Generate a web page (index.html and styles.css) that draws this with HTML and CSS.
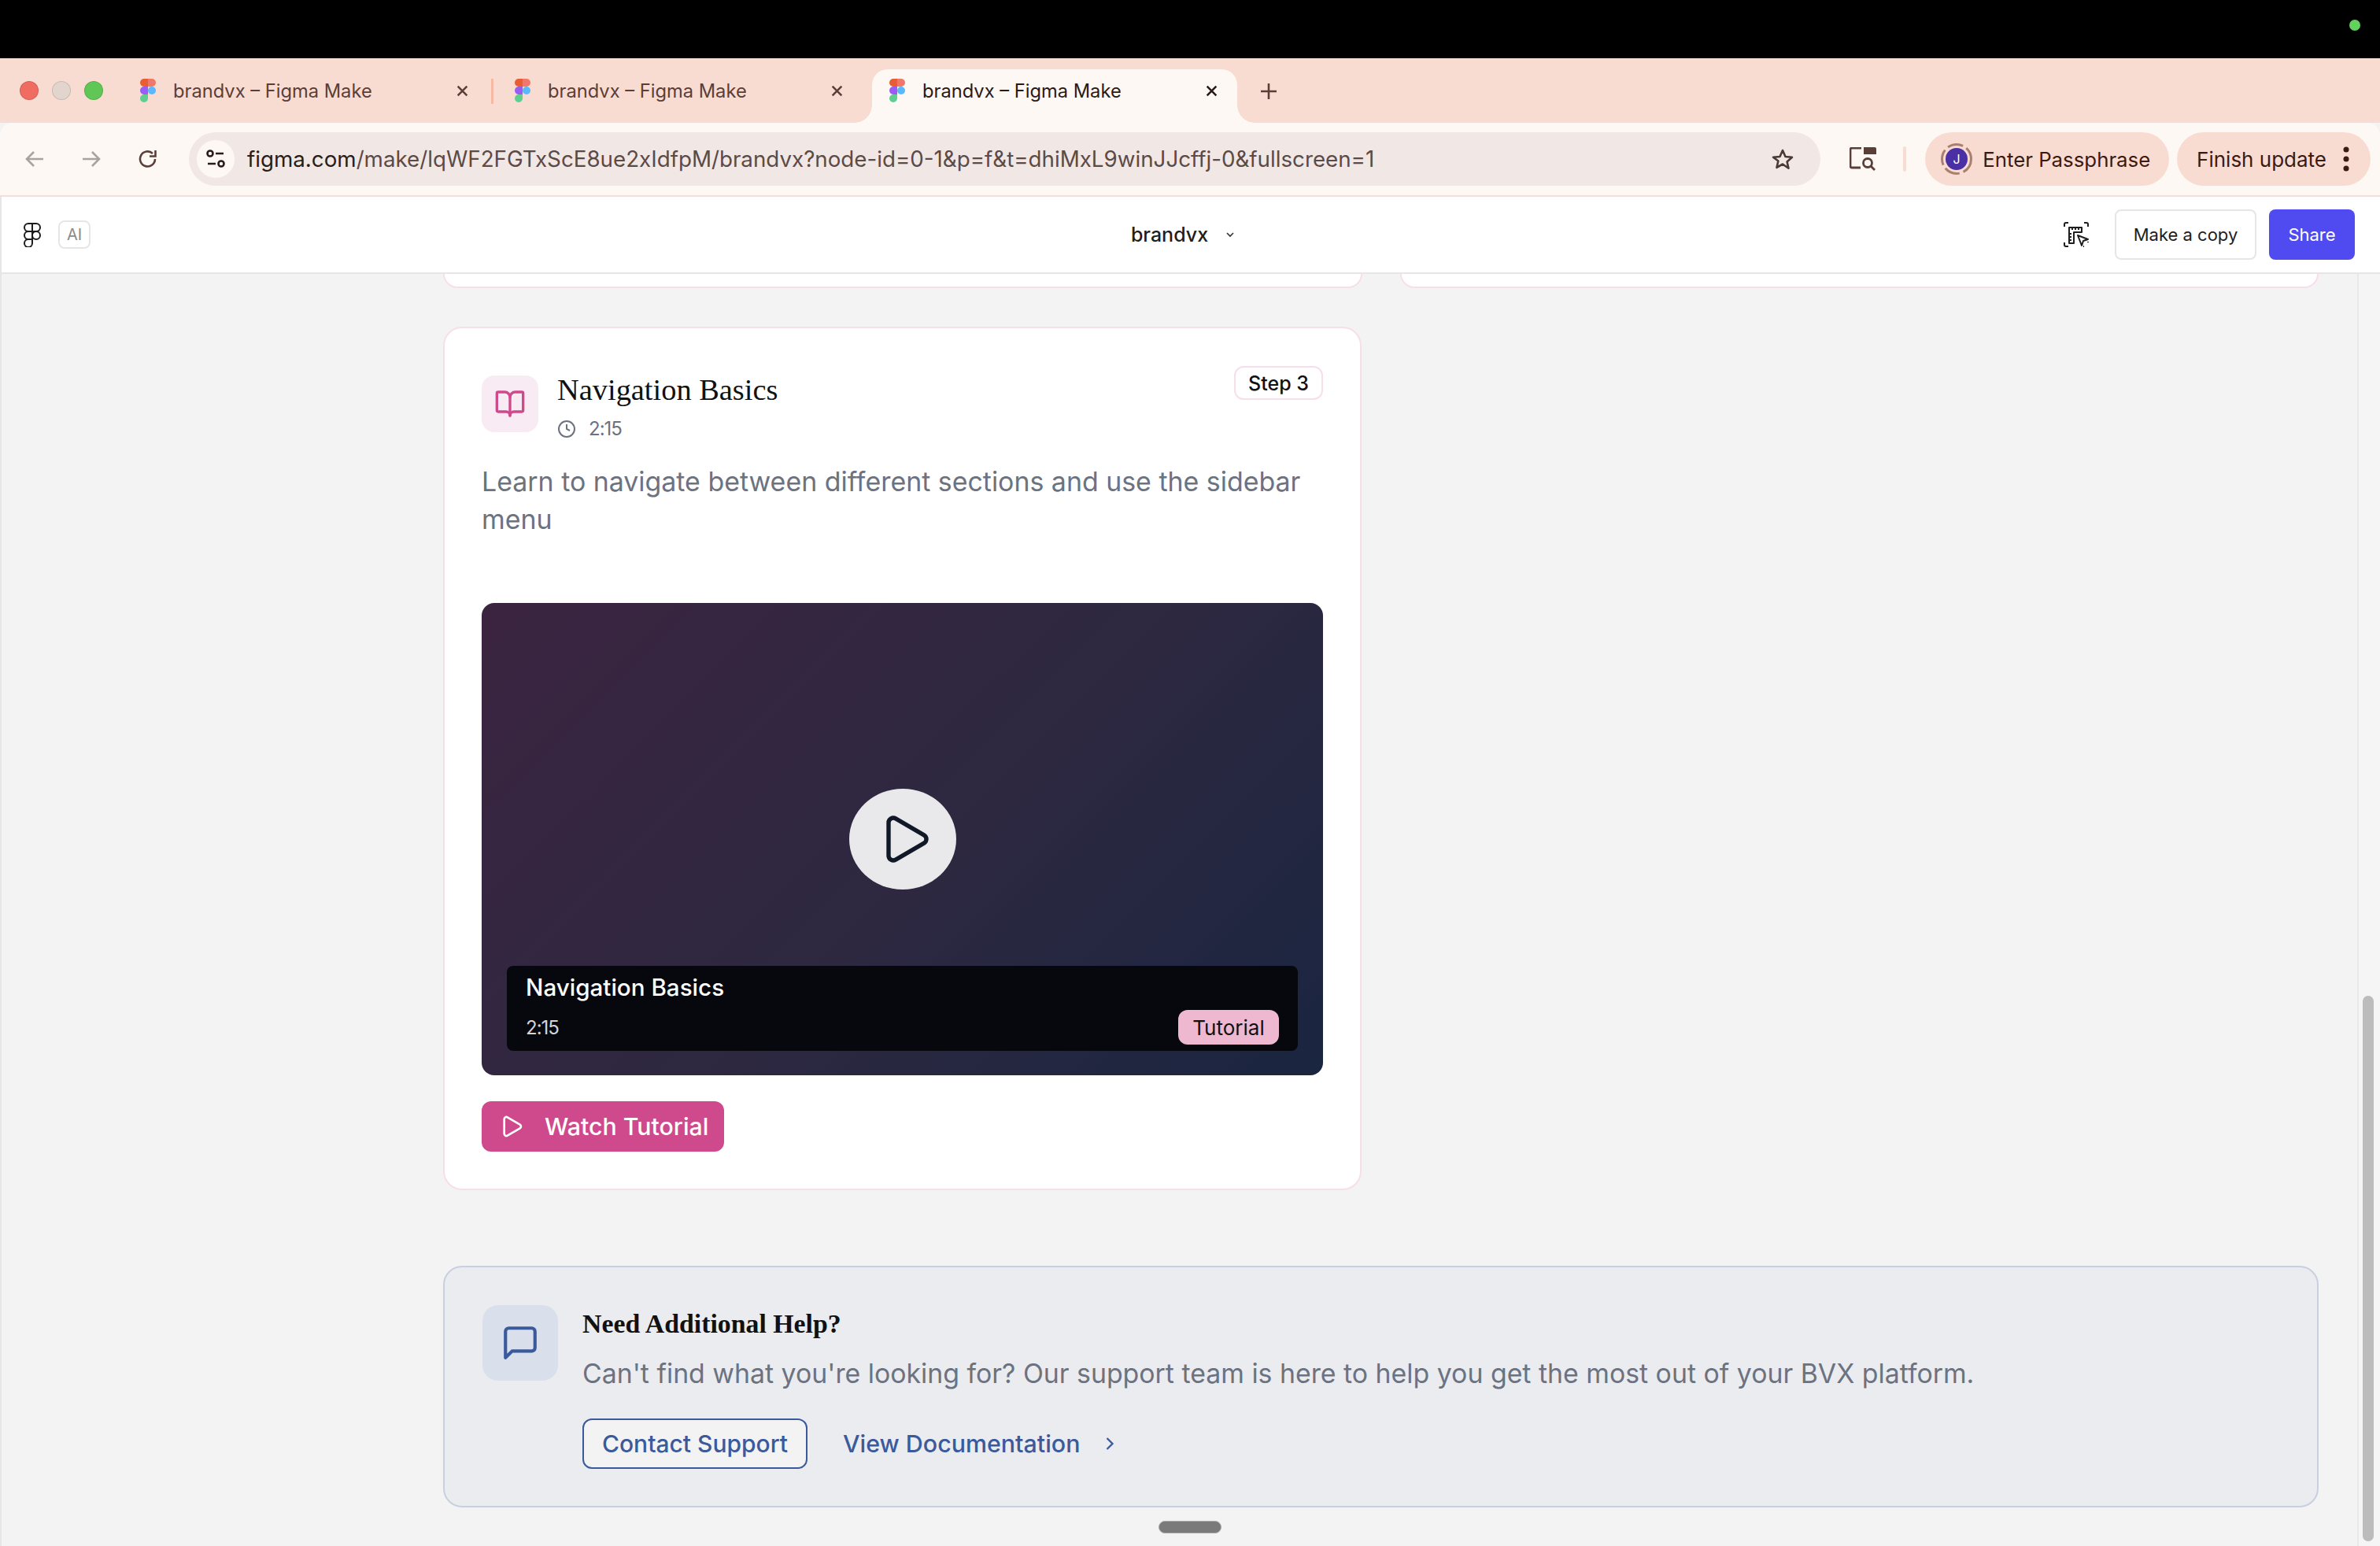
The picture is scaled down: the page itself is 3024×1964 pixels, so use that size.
FILE: index.html
```html
<!DOCTYPE html>
<html lang="en">
  <head>
    <meta charset="UTF-8" />
    <title>brandvx – Figma Make</title>
    <link rel="stylesheet" href="styles.css">
  </head>
  <body>
    <div class="topbar"><span class="cam-dot"></span></div>

    <div class="tabstrip">
      <div class="lights">
        <span class="light red"></span>
        <span class="light grey"></span>
        <span class="light green"></span>
      </div>
      <div class="tab">
        <svg class="favicon" viewBox="0 0 20 30"><path fill="#e85d33" d="M10 0H5a5 5 0 0 0 0 10h5z"/><path fill="#f0786a" d="M10 0h5a5 5 0 0 1 0 10h-5z"/><path fill="#9a5cf5" d="M0 15a5 5 0 0 1 5-5h5v10H5a5 5 0 0 1-5-5z"/><circle fill="#5ab8ff" cx="15" cy="15" r="5"/><path fill="#5fcf8f" d="M0 25a5 5 0 0 1 5-5h5v5a5 5 0 0 1-10 0z"/></svg>
        <span class="tab-title">brandvx – Figma Make</span>
        <svg class="tab-close" viewBox="0 0 16 16"><path d="M2.5 2.5l11 11M13.5 2.5l-11 11"/></svg>
      </div>
      <span class="tab-sep"></span>
      <div class="tab">
        <svg class="favicon" viewBox="0 0 20 30"><path fill="#e85d33" d="M10 0H5a5 5 0 0 0 0 10h5z"/><path fill="#f0786a" d="M10 0h5a5 5 0 0 1 0 10h-5z"/><path fill="#9a5cf5" d="M0 15a5 5 0 0 1 5-5h5v10H5a5 5 0 0 1-5-5z"/><circle fill="#5ab8ff" cx="15" cy="15" r="5"/><path fill="#5fcf8f" d="M0 25a5 5 0 0 1 5-5h5v5a5 5 0 0 1-10 0z"/></svg>
        <span class="tab-title">brandvx – Figma Make</span>
        <svg class="tab-close" viewBox="0 0 16 16"><path d="M2.5 2.5l11 11M13.5 2.5l-11 11"/></svg>
      </div>
      <div class="tab active">
        <svg class="favicon" viewBox="0 0 20 30"><path fill="#e85d33" d="M10 0H5a5 5 0 0 0 0 10h5z"/><path fill="#f0786a" d="M10 0h5a5 5 0 0 1 0 10h-5z"/><path fill="#9a5cf5" d="M0 15a5 5 0 0 1 5-5h5v10H5a5 5 0 0 1-5-5z"/><circle fill="#5ab8ff" cx="15" cy="15" r="5"/><path fill="#5fcf8f" d="M0 25a5 5 0 0 1 5-5h5v5a5 5 0 0 1-10 0z"/></svg>
        <span class="tab-title">brandvx – Figma Make</span>
        <svg class="tab-close" viewBox="0 0 16 16"><path d="M2.5 2.5l11 11M13.5 2.5l-11 11"/></svg>
      </div>
      <svg class="new-tab" viewBox="0 0 22 22"><path d="M11 1v20M1 11h20"/></svg>
    </div>

    <div class="toolbar">
      <svg class="nav-icon dim" viewBox="0 0 24 24"><path d="M23 12H2M11 3l-9 9 9 9"/></svg>
      <svg class="nav-icon dim" viewBox="0 0 24 24"><path d="M1 12h21M13 3l9 9-9 9"/></svg>
      <svg class="nav-icon reload" viewBox="0 0 24 24"><path d="M21 12a9.500 9.500 0 1 1-3-7"/><path d="M21.500 1v7.500H14"/></svg>
      <div class="omnibox">
        <span class="site-btn">
          <svg viewBox="0 0 26 24"><circle cx="6" cy="5" r="3.500"/><path d="M13 5h10M3 18h10"/><circle cx="20" cy="18" r="3.500"/></svg>
        </span>
        <span class="url"><b>figma.com</b>/make/lqWF2FGTxScE8ue2xIdfpM/brandvx?node-id=0-1&amp;p=f&amp;t=dhiMxL9winJJcffj-0&amp;fullscreen=1</span>
        <svg class="star" viewBox="0 0 30 28"><path d="M15 3l3.500 8 8.500.8-6.400 5.700 1.900 8.300L15 20.500l-7.500 4.300 1.900-8.300L3 11.800l8.500-.8z"/></svg>
      </div>
      <svg class="lens" viewBox="0 0 34 30"><path class="lens-line" d="M14 26H3a2 2 0 0 1-2-2V3a2 2 0 0 1 2-2h12"/><path class="lens-fill" d="M18 0h14a2 2 0 0 1 2 2v7H18z"/><circle class="lens-line" cx="23" cy="20" r="5.500"/><path class="lens-line" d="M27 24l5 5"/></svg>
      <span class="tool-sep"></span>
      <div class="pill passphrase">
        <svg class="avatar" viewBox="0 0 40 40"><circle class="ring" cx="20" cy="20" r="18.500"/><circle fill="#4a2fa5" cx="20" cy="20" r="14"/><text x="20" y="25.500" text-anchor="middle">J</text></svg>
        <span>Enter Passphrase</span>
      </div>
      <div class="pill update">
        <span>Finish update</span>
        <svg class="kebab" viewBox="0 0 8 32"><circle cx="4" cy="4" r="3.500"/><circle cx="4" cy="16" r="3.500"/><circle cx="4" cy="28" r="3.500"/></svg>
      </div>
    </div>

    <header class="make-head">
      <div class="head-left">
        <svg class="figma-mark" viewBox="0 0 22 31"><path d="M11 1H6a5 5 0 0 0 0 10h5zM11 1h5a5 5 0 0 1 0 10h-5zM11 11H6a5 5 0 0 0 0 10h5zM11 21H6a5 5 0 1 0 5 5z"/><circle cx="16" cy="16" r="5"/></svg>
        <span class="ai-chip">AI</span>
      </div>
      <div class="head-title">
        <span>brandvx</span>
        <svg viewBox="0 0 12 8"><path d="M2 2l4 4 4-4"/></svg>
      </div>
      <div class="head-right">
        <svg class="dev-icon" viewBox="0 0 32 32"><path class="thin" d="M1 6V3a2 2 0 0 1 2-2h3M26 1h3a2 2 0 0 1 2 2v3M1 26v3a2 2 0 0 0 2 2h3M31 25v1M26 31h-1"/><path class="thin" d="M7 7h16v6H13v14H7z"/><path class="thin" d="M11 7v3M15 7v3M19 7v3M7 15h3M7 19h3M7 23h3"/><path class="thin cursor" d="M18 17l13 5-6 2-2 6z"/></svg>
        <button class="btn-copy">Make a copy</button>
        <button class="btn-share">Share</button>
      </div>
    </header>

    <main class="page">
      <div class="content">
        <div class="grid">
          <div class="card-cut"></div>
          <div class="card-cut"></div>
        </div>

        <section class="card">
          <div class="card-head">
            <div class="card-title-group">
              <span class="card-icon">
                <svg viewBox="0 0 24 24"><path d="M12 7v14"/><path d="M3 18a1 1 0 0 1-1-1V4a1 1 0 0 1 1-1h5a4 4 0 0 1 4 4 4 4 0 0 1 4-4h5a1 1 0 0 1 1 1v13a1 1 0 0 1-1 1h-6a3 3 0 0 0-3 3 3 3 0 0 0-3-3z"/></svg>
              </span>
              <div>
                <h3>Navigation Basics</h3>
                <div class="duration">
                  <svg viewBox="0 0 24 24"><circle cx="12" cy="12" r="10"/><path d="M12 6v6l4 2"/></svg>
                  <span>2:15</span>
                </div>
              </div>
            </div>
            <span class="step">Step 3</span>
          </div>
          <p class="card-desc">Learn to navigate between different sections and use the sidebar menu</p>

          <div class="video">
            <span class="play">
              <svg viewBox="0 0 24 24"><path d="M5 5a2 2 0 0 1 3.008-1.728l11.997 6.998a2 2 0 0 1 .003 3.458l-12 7A2 2 0 0 1 5 19z"/></svg>
            </span>
            <div class="video-caption">
              <div class="caption-title">Navigation Basics</div>
              <div class="caption-row">
                <span class="caption-time">2:15</span>
                <span class="caption-tag">Tutorial</span>
              </div>
            </div>
          </div>

          <button class="watch">
            <svg viewBox="0 0 24 24"><path d="M5 5a2 2 0 0 1 3.008-1.728l11.997 6.998a2 2 0 0 1 .003 3.458l-12 7A2 2 0 0 1 5 19z"/></svg>
            Watch Tutorial
          </button>
        </section>

        <section class="help">
          <span class="help-icon">
            <svg viewBox="0 0 24 24"><path d="M21 15a2 2 0 0 1-2 2H7l-4 4V5a2 2 0 0 1 2-2h14a2 2 0 0 1 2 2z"/></svg>
          </span>
          <div>
            <h4>Need Additional Help?</h4>
            <p class="help-text">Can't find what you're looking for? Our support team is here to help you get the most out of your BVX platform.</p>
            <div class="help-actions">
              <button class="btn-contact">Contact Support</button>
              <a class="docs-link">View Documentation
                <svg viewBox="0 0 24 24"><path d="m9 18 6-6-6-6"/></svg>
              </a>
            </div>
          </div>
        </section>
      </div>

      <aside class="scrollbar"><span class="thumb"></span></aside>
      <span class="home-handle"></span>
    </main>
  </body>
</html>
```

FILE: styles.css
```css
* {
  box-sizing: border-box;
}

html,
body {
  margin: 0;
  width: 3024px;
  height: 1964px;
  overflow: hidden;
}

body {
  font-family: Inter, "Liberation Sans", sans-serif;
  background: #f3f3f3;
  display: flex;
  flex-direction: column;
}

svg {
  display: block;
  flex: none;
  fill: none;
}

button {
  font-family: inherit;
  cursor: pointer;
}

/* mac top bar */
.topbar {
  height: 74px;
  background: #000;
  display: flex;
  justify-content: flex-end;
  padding: 25px 25px 0 0;
}

.cam-dot {
  width: 14px;
  height: 14px;
  border-radius: 50%;
  background: #62d25c;
}

/* tabs */
.tabstrip {
  height: 82px;
  background: #f9dcd1;
  display: flex;
  align-items: flex-end;
  padding-left: 156px;
  position: relative;
}

.lights {
  position: absolute;
  left: 25px;
  top: 29px;
  display: flex;
  gap: 17px;
}

.light {
  width: 24px;
  height: 24px;
  border-radius: 50%;
  border: 1px solid rgba(0, 0, 0, 0.12);
}

.red {
  background: #f06c60;
}

.grey {
  background: #e2d5ce;
}

.green {
  background: #60c757;
}

.tab {
  width: 464px;
  height: 68px;
  padding: 0 22px 14px;
  margin-right: 12px;
  display: flex;
  align-items: center;
  color: #5a3f38;
  position: relative;
  border-radius: 20px 20px 0 0;
}

.tab-sep {
  width: 3px;
  height: 32px;
  background: #f8b9a4;
  margin: 0 5px 24px -8px;
}

.favicon {
  width: 20px;
  height: 30px;
}

.tab-title {
  margin-left: 22px;
  font-size: 23.7px;
  flex: 1;
  white-space: nowrap;
}

.tab-close {
  width: 17px;
  height: 17px;
  stroke: currentColor;
  stroke-width: 2.4;
  margin-right: 2px;
}

.tab.active {
  background: #fef8f5;
  color: #2a1a16;
}

.tab.active::before,
.tab.active::after {
  content: "";
  position: absolute;
  bottom: 0;
  width: 22px;
  height: 22px;
}

.tab.active::before {
  left: -22px;
  background: radial-gradient(circle at 0 0, transparent 21.5px, #fef8f5 22px);
}

.tab.active::after {
  right: -22px;
  background: radial-gradient(circle at 100% 0, transparent 21.5px, #fef8f5 22px);
}

.new-tab {
  width: 22px;
  height: 22px;
  stroke: #5a3f38;
  stroke-width: 2.6;
  margin: 0 0 29px 17px;
}

/* toolbar */
.toolbar {
  height: 94px;
  background: #fef8f5;
  border-bottom: 2px solid #f3dfd8;
  border-radius: 16px 16px 0 0;
  display: flex;
  align-items: center;
  padding: 0 12px 0 32px;
}

.nav-icon {
  width: 24px;
  height: 24px;
  margin-right: 48px;
  stroke: #5a3f38;
  stroke-width: 2.6;
}

.nav-icon.dim {
  stroke: #aaa29e;
}

.nav-icon.reload {
  margin-right: 40px;
}

.omnibox {
  width: 2074px;
  height: 68px;
  border-radius: 34px;
  background: #f1e8e6;
  display: flex;
  align-items: center;
  padding: 0 33px 0 10px;
}

.site-btn {
  width: 48px;
  height: 48px;
  border-radius: 50%;
  background: #fef8f5;
  display: flex;
  align-items: center;
  justify-content: center;
}

.site-btn svg {
  width: 26px;
  height: 24px;
  stroke: #2a1c18;
  stroke-width: 2.6;
}

.url {
  margin-left: 16px;
  font-size: 27.74px;
  color: #5c4a46;
  flex: 1;
  white-space: nowrap;
}

.url b {
  font-weight: 400;
  color: #2a1c18;
}

.star {
  width: 30px;
  height: 28px;
  stroke: #4a3a36;
  stroke-width: 2.6;
  stroke-linejoin: round;
}

.lens {
  width: 34px;
  height: 30px;
  margin-left: 37px;
}

.lens-line {
  stroke: #5a3f38;
  stroke-width: 2.8;
}

.lens-fill {
  fill: #5a3f38;
}

.tool-sep {
  width: 4px;
  height: 32px;
  background: #f9dcd1;
  border-radius: 2px;
  margin: 0 24px 0 34px;
}

.pill {
  height: 68px;
  border-radius: 34px;
  background: #f9dcd1;
  display: flex;
  align-items: center;
  font-size: 26px;
  color: #3b1a12;
}

.passphrase {
  width: 310px;
  padding-left: 20px;
  margin-right: 10px;
  gap: 13px;
  font-size: 25.8px;
}

.avatar {
  width: 40px;
  height: 40px;
}

.ring {
  stroke: #a9806f;
  stroke-width: 3;
  stroke-dasharray: 20 5;
}

.avatar text {
  fill: #fff;
  font-size: 16px;
}

.update {
  width: 246px;
  padding-left: 25px;
  gap: 21px;
}

.kebab {
  width: 8px;
  height: 32px;
  fill: #3b1a12;
}

/* figma make header */
.make-head {
  height: 98px;
  background: #fff;
  border-left: 2px solid #e6e6e6;
  border-bottom: 2px solid #e6e6e6;
  display: grid;
  grid-template-columns: 1fr auto 1fr;
  align-items: center;
  padding: 0 32px 0 28px;
}

.head-left {
  display: flex;
  align-items: center;
  gap: 22px;
}

.figma-mark {
  width: 22px;
  height: 31px;
  stroke: #1c1c1c;
  stroke-width: 2;
}

.ai-chip {
  width: 41px;
  height: 36px;
  border: 2px solid #e6e6e6;
  border-radius: 8px;
  font-size: 20px;
  color: #8a8a8a;
  display: flex;
  align-items: center;
  justify-content: center;
}

.head-title {
  display: flex;
  align-items: center;
  gap: 22px;
  padding-right: 16px;
  font-size: 25px;
  font-weight: 500;
  color: #1e1e1e;
}

.head-title svg {
  width: 12px;
  height: 8px;
  stroke: #333;
  stroke-width: 1.6;
}

.head-right {
  display: flex;
  align-items: center;
  justify-content: flex-end;
}

.dev-icon {
  width: 32px;
  height: 32px;
  margin-right: 33px;
}

.thin {
  stroke: #1e1e1e;
  stroke-width: 2;
  stroke-linejoin: round;
}

.cursor {
  fill: #fff;
}

.btn-copy,
.btn-share {
  height: 64px;
  border-radius: 8px;
  font-size: 22px;
}

.btn-copy {
  width: 180px;
  background: #fff;
  border: 2px solid #e6e6e6;
  color: #1e1e1e;
  margin-right: 16px;
}

.btn-share {
  width: 109px;
  border: none;
  background: #4f4bf0;
  color: #fff;
}

/* page */
.page {
  flex: 1;
  min-height: 0;
  display: flex;
  border-left: 2px solid #e6e6e6;
  position: relative;
}

.content {
  flex: 1;
  padding: 0 49px 0 561px;
}

.grid {
  display: grid;
  grid-template-columns: 1fr 1fr;
  gap: 48px;
}

.card-cut {
  height: 18px;
  background: #fff;
  border: 2px solid #f6dfea;
  border-top: none;
  border-radius: 0 0 24px 24px;
}

.card {
  width: 1167px;
  height: 1097px;
  margin-top: 49px;
  padding: 48px 47px 47px;
  background: #fff;
  border: 2px solid #f6dfea;
  border-radius: 24px;
}

.card-head {
  display: flex;
  justify-content: space-between;
  align-items: flex-start;
}

.card-title-group {
  display: flex;
  gap: 24px;
}

.card-icon {
  width: 72px;
  height: 72px;
  margin-top: 12px;
  border-radius: 16px;
  background: #f9ebf3;
  display: flex;
  align-items: center;
  justify-content: center;
}

.card-icon svg {
  width: 40px;
  height: 40px;
  stroke: #cf4a8c;
  stroke-width: 2;
  stroke-linecap: round;
  stroke-linejoin: round;
}

h3 {
  margin: 6px 0 0;
  font-family: "Liberation Serif", serif;
  font-size: 38.4px;
  line-height: 48px;
  font-weight: 400;
  color: #111;
}

.duration {
  display: flex;
  align-items: center;
  gap: 16px;
  margin-top: 11px;
  font-size: 24px;
  letter-spacing: -1px;
  color: #6b7280;
}

.duration svg {
  width: 24px;
  height: 24px;
  stroke: #6b7280;
  stroke-width: 2;
}

.step {
  height: 43px;
  padding: 0 16px;
  border: 2px solid #f6dfea;
  border-radius: 12px;
  display: flex;
  align-items: center;
  font-size: 25px;
  font-weight: 500;
  color: #111;
}

.card-desc {
  margin: 29px 0 82px;
  font-size: 33.9px;
  line-height: 48px;
  color: #6b7280;
}

.video {
  height: 600px;
  border-radius: 16px;
  background: linear-gradient(135deg, #3b2440 0%, #2d2840 55%, #1a2540 100%);
  display: flex;
  flex-direction: column;
  align-items: center;
  padding: 236px 32px 31px;
}

.play {
  width: 136px;
  height: 128px;
  padding-left: 6px;
  border-radius: 50%;
  background: #e9e9eb;
  display: flex;
  align-items: center;
  justify-content: center;
}

.play svg {
  width: 72px;
  height: 72px;
  stroke: #111827;
  stroke-width: 1.8;
  stroke-linejoin: round;
}

.video-caption {
  width: 100%;
  height: 108px;
  margin-top: auto;
  padding: 0 24px;
  background: #07080d;
  border-radius: 8px;
  color: #fff;
}

.caption-title {
  padding-top: 8px;
  font-size: 29.6px;
  line-height: 38px;
  font-weight: 500;
}

.caption-row {
  display: flex;
  justify-content: space-between;
  align-items: center;
  margin-top: 10px;
}

.caption-time {
  font-size: 24px;
  letter-spacing: -1px;
  color: #d4d4d6;
}

.caption-tag {
  width: 128px;
  height: 44px;
  border-radius: 12px;
  background: #eeb8d0;
  color: #111;
  font-size: 26px;
  display: flex;
  align-items: center;
  justify-content: center;
}

.watch {
  width: 308px;
  height: 64px;
  margin-top: 33px;
  padding: 0 0 0 22px;
  border: none;
  border-radius: 12px;
  background: #cf4a8c;
  color: #fff;
  font-size: 30.3px;
  font-weight: 500;
  display: flex;
  align-items: center;
  gap: 26px;
}

.watch svg {
  width: 32px;
  height: 32px;
  stroke: #fff;
  stroke-width: 2;
  stroke-linejoin: round;
}

.help {
  height: 307px;
  margin-top: 96px;
  padding: 48px;
  background: #ebecf0;
  border: 2px solid #c8d0e0;
  border-radius: 24px;
  display: flex;
  gap: 31px;
}

.help-icon {
  width: 96px;
  height: 96px;
  border-radius: 20px;
  background: #d9e0eb;
  display: flex;
  align-items: center;
  justify-content: center;
}

.help-icon svg {
  width: 50px;
  height: 50px;
  stroke: #3a5a9c;
  stroke-width: 2;
  stroke-linejoin: round;
}

h4 {
  margin: 0;
  font-family: "Liberation Serif", serif;
  font-size: 33.8px;
  line-height: 48px;
  font-weight: 700;
  color: #111;
}

.help-text {
  margin: 15px 0 33px;
  font-size: 33.85px;
  line-height: 48px;
  color: #6b7280;
  white-space: nowrap;
}

.help-actions {
  display: flex;
  align-items: center;
  gap: 45px;
  color: #3a5a9c;
  font-size: 30.4px;
  font-weight: 500;
}

.btn-contact {
  width: 286px;
  height: 64px;
  background: #f3f3f3;
  border: 2px solid #3a5a9c;
  border-radius: 12px;
  color: #3a5a9c;
  font-size: 30px;
  font-weight: 500;
}

.docs-link {
  display: flex;
  align-items: center;
  gap: 24px;
}

.docs-link svg {
  width: 28px;
  height: 28px;
  stroke: #3a5a9c;
  stroke-width: 2;
}

.scrollbar {
  width: 29px;
  background: #f5f5f5;
  border-left: 2px solid #e8e8e8;
  padding: 917px 0 0 5px;
}

.thumb {
  display: block;
  width: 14px;
  height: 693px;
  border-radius: 7px;
  background: #bcbcbc;
}

.home-handle {
  position: absolute;
  left: 1470px;
  bottom: 16px;
  width: 80px;
  height: 16px;
  border-radius: 8px;
  background: #7a7a7a;
  border: 1px solid #a8a8a8;
}
```
